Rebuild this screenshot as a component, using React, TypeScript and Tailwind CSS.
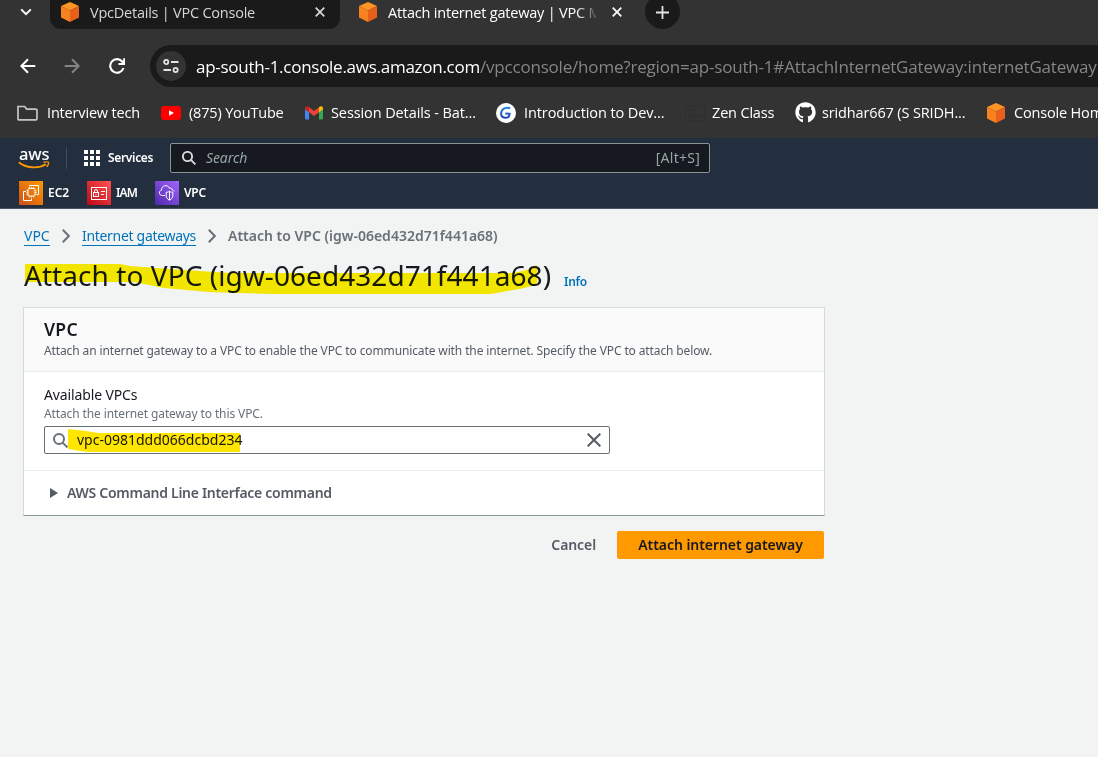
import { FaGithub } from "react-icons/fa";

function Cube() {
  return (
    <svg viewBox="0 0 18 20" className="h-5 w-[18px] shrink-0">
      <path d="M9 0 18 4 9 8.5 0 4Z" fill="#fd9526" />
      <path d="M0 4 9 8.5V20L0 15.5Z" fill="#f8821f" />
      <path d="M18 4 9 8.5V20l9-4.5Z" fill="#e9601c" />
    </svg>
  );
}

function CloseGlyph({ color }: { color: string }) {
  return (
    <svg viewBox="0 0 10 10" className="size-[10px] shrink-0">
      <path d="M.7.7 9.3 9.3M9.3.7.7 9.3" stroke={color} strokeWidth="1.7" />
    </svg>
  );
}

function TabStrip() {
  return (
    <div className="flex h-[45px] items-start pl-5 text-[14.5px]">
      <svg viewBox="0 0 12 8" className="mt-2 h-2 w-3 shrink-0">
        <path d="M1.2 1.4 6 6.2l4.8-4.8" fill="none" stroke="#fff" strokeWidth="2" />
      </svg>
      <div className="ml-[18px] flex h-[29px] w-[290px] shrink-0 items-start rounded-b-[11px] bg-[#1a1a1a] pl-[11px]">
        <div className="mt-[2px]">
          <Cube />
        </div>
        <span className="mt-[3px] ml-[11px] w-[225px] leading-5 tracking-[-0.23px] whitespace-nowrap text-[#d6d6d6]">VpcDetails | VPC Console</span>
        <div className="mt-[7px]">
          <CloseGlyph color="#d8d8d8" />
        </div>
      </div>
      <div className="mt-[2px] ml-[19px]">
        <Cube />
      </div>
      <div className="mt-[3px] ml-[11px] w-[208px] shrink-0 overflow-hidden leading-5 tracking-[-0.2px] whitespace-nowrap text-white [mask-image:linear-gradient(to_right,#000_188px,transparent_212px)]">
        Attach internet gateway | VPC M
      </div>
      <div className="mt-[7px] ml-[16px]">
        <CloseGlyph color="#ffffff" />
      </div>
      <div className="-mt-[6px] ml-[23px] flex size-[35px] shrink-0 items-center justify-center rounded-full bg-[#1a1a1a]">
        <svg viewBox="0 0 13 13" className="mt-px size-[13px]">
          <path d="M6.5 0v13M0 6.5h13" stroke="#e2e2e2" strokeWidth="1.8" />
        </svg>
      </div>
    </div>
  );
}

function AddressRow() {
  return (
    <div className="flex h-[42px] items-center pl-5">
      <svg viewBox="0 0 16 16" className="size-4 shrink-0" fill="none" stroke="#fff" strokeWidth="2">
        <path d="M15.3 8H2M8 1.3 1.4 8 8 14.7" />
      </svg>
      <svg viewBox="0 0 16 16" className="ml-[28px] size-4 shrink-0" fill="none" stroke="#848484" strokeWidth="2">
        <path d="M.7 8H14M8 1.3 14.6 8 8 14.7" />
      </svg>
      <svg viewBox="0 0 16 16" className="ml-[29px] size-4 shrink-0" fill="none" stroke="#fff" strokeWidth="2.1">
        <path d="M14.5 10A6.8 6.8 0 1 1 13.2 3.5L15 5.5M15.2 .3V6H9.5" />
      </svg>
      <div className="ml-[25px] flex h-[42px] flex-1 items-center overflow-hidden rounded-l-full bg-[#1a1a1a] pl-[6px]">
        <div className="flex size-[30px] shrink-0 items-center justify-center rounded-full bg-[#333333]">
          <svg viewBox="0 0 16 14" className="h-[14px] w-4" fill="none" stroke="#e3e3e3" strokeWidth="1.8">
            <circle cx="3.2" cy="3" r="2.1" />
            <path d="M8 3h7.5M.5 11H8" />
            <circle cx="12.6" cy="11" r="2.1" />
          </svg>
        </div>
        <div className="ml-[10px] flex pt-[1px] text-[17px] leading-6 whitespace-nowrap text-[#858585]">
          <span className="tracking-[-0.265px] text-white">ap-south-1.console.aws.amazon.com</span>
          <span className="tracking-[-0.19px]">/vpcconsole/home?region=ap-south-1#AttachInternetGateway:internetGateway</span>
        </div>
      </div>
    </div>
  );
}

function BookmarksBar() {
  return (
    <div className="flex h-[51px] items-center overflow-hidden pl-[17px] text-[14.5px] leading-5 tracking-[-0.17px] whitespace-nowrap text-white">
      <svg viewBox="0 0 21 16" className="h-4 w-[21px] shrink-0" fill="none" stroke="#c7c7c7" strokeWidth="1.7">
        <path d="M1 1.5h6.6l2.1 2.6h9.1q1.2 0 1.2 1.2v8.4q0 1.2-1.2 1.2H2.2Q1 14.9 1 13.7Z" />
      </svg>
      <span className="ml-[9px] w-[114px] shrink-0">Interview tech</span>
      <svg viewBox="0 0 20 14" className="h-[14px] w-5 shrink-0">
        <rect width="20" height="14" rx="3.2" fill="#f00" />
        <path d="M8 4.2 13 7 8 9.8Z" fill="#fff" />
      </svg>
      <span className="ml-[8px] w-[116px] shrink-0">(875) YouTube</span>
      <svg viewBox="0 0 18 14" className="h-[14px] w-[18px] shrink-0">
        <path d="M0 2.5 4 5.2V13.5H1.3Q0 13.5 0 12.2Z" fill="#4285f4" />
        <path d="M18 2.5 14 5.2V13.5h2.7q1.3 0 1.3-1.3Z" fill="#34a853" />
        <path d="M4 1.2 9 5l5-3.8v5L9 10 4 6.2Z" fill="#ea4335" />
        <path d="M0 2.2Q0 .2 2 .2q1 0 2 1v5L0 3.2Z" fill="#c5221f" />
        <path d="M18 2.2Q18 .2 16 .2q-1 0-2 1v5l4-3Z" fill="#fbbc04" />
      </svg>
      <span className="ml-[8px] w-[165px] shrink-0 tracking-[-0.1px]">Session Details - Bat...</span>
      <svg viewBox="0 0 20 20" className="size-5 shrink-0">
        <defs>
          <linearGradient id="gl" x1="0" y1="0" x2="0" y2="1">
            <stop offset="0" stopColor="#2f86dc" />
            <stop offset="1" stopColor="#1a3fb0" />
          </linearGradient>
        </defs>
        <circle cx="10" cy="10" r="10" fill="#fff" />
        <path d="M14.3 5.3C10.5 3.7 5.2 5.5 5.1 10.6c0 5.4 8.2 5.9 8.5.1L9.3 10.6" fill="none" stroke="url(#gl)" strokeWidth="2" />
      </svg>
      <span className="ml-[8px] w-[161px] shrink-0 tracking-[-0.1px]">Introduction to Dev...</span>
      <svg viewBox="0 0 20 16" className="h-4 w-5 shrink-0" fill="none" stroke="#2f2f2f" strokeWidth="1">
        <rect x=".5" y=".5" width="19" height="15" />
        <path d="M3 5h7M3 11h14" />
      </svg>
      <span className="ml-[7px] w-[83px] shrink-0">Zen Class</span>
      <FaGithub className="size-[21px] shrink-0" />
      <span className="ml-[6px] w-[165px] shrink-0 tracking-[-0.14px]">sridhar667 (S SRIDH...</span>
      <Cube />
      <span className="ml-[9px] shrink-0">Console Hom</span>
    </div>
  );
}

function Ec2Icon() {
  return (
    <svg viewBox="0 0 24 24" className="size-6 shrink-0" fill="none" stroke="#fff" strokeWidth="1">
      <defs>
        <linearGradient id="ec2" x1="0" y1="1" x2="1" y2="0">
          <stop offset="0" stopColor="#c8511b" />
          <stop offset="1" stopColor="#f90" />
        </linearGradient>
      </defs>
      <rect width="24" height="24" fill="url(#ec2)" stroke="none" />
      <path d="M10.5 5.5v-1h9v9h-1.500M7 10.500h-2.500v9h8V17.500" />
      <rect x="9" y="7.5" width="7" height="7.5" rx="1" />
      <path d="M10.5 6v1.5M12.5 6v1.5M14.5 6v1.5M10.5 15v1.5M12.5 15v1.5M14.5 15v1.5M7.5 9.5H9M7.5 11.5H9M7.5 13.5H9M16 9.5h1.5M16 11.5h1.5M16 13.5h1.5" strokeWidth=".8" />
    </svg>
  );
}

function IamIcon() {
  return (
    <svg viewBox="0 0 24 24" className="size-6 shrink-0" fill="none" stroke="#fff" strokeWidth="1">
      <defs>
        <linearGradient id="iam" x1="0" y1="1" x2="1" y2="0">
          <stop offset="0" stopColor="#bd0816" />
          <stop offset="1" stopColor="#ff5252" />
        </linearGradient>
      </defs>
      <rect width="24" height="24" fill="url(#iam)" stroke="none" />
      <rect x="4.5" y="6.5" width="15" height="12" />
      <rect x="6.5" y="11.5" width="5" height="4" />
      <path d="M7.5 11.5V10a1.5 1.5 0 0 1 3 0v1.5M9 13v1.2M14 10.5h4M14 13.5h3" />
    </svg>
  );
}

function VpcIcon() {
  return (
    <svg viewBox="0 0 24 24" className="size-6 shrink-0" fill="none" stroke="#fff" strokeWidth="1">
      <defs>
        <linearGradient id="vpc" x1="0" y1="1" x2="1" y2="0">
          <stop offset="0" stopColor="#4d27a8" />
          <stop offset="1" stopColor="#a166ff" />
        </linearGradient>
      </defs>
      <rect width="24" height="24" fill="url(#vpc)" stroke="none" />
      <path d="M10 14.5H7.3C3.6 14.3 3.6 9.9 6.5 9.1 6.3 4.2 12.8 3 14.5 7.3c1.7-.8 2.8.4 2.8 1.7 1.3.2 1.900.8 2.100 1.500" />
      <path d="M14.5 10.3c-1.2.8-2 .9-3.3.9v3.6c0 2 1.3 3.3 3.3 4.4 2-1.1 3.3-2.4 3.3-4.4v-3.6c-1.3 0-2.1-.1-3.3-.9ZM14.5 10.5v8.5" />
    </svg>
  );
}

function ConsoleHeader() {
  return (
    <header className="h-[71px] border-b border-[#4b5563] bg-[#232f3e] text-white">
      <div className="flex h-10 items-center pl-[18px]">
        <div className="flex h-6 w-8 shrink-0 flex-col">
          <span className="pl-px text-[16.5px] leading-[15px] font-medium tracking-[-0.1px]">aws</span>
          <svg viewBox="0 0 32 9" className="h-[9px] w-8" fill="none" stroke="#f90">
            <path d="M.8 1.2C8 7.2 20 8 28 3.2" strokeWidth="1.8" />
            <path d="M25.5 1.5c2-.8 4.6-.8 5 0s-.4 2.6-1.8 4.2" strokeWidth="1.4" />
          </svg>
        </div>
        <div className="ml-4 h-[22px] w-px bg-[#414d5c]" />
        <svg viewBox="0 0 16 16" className="ml-[17px] size-4 shrink-0" fill="#fff">
          <path d="M0 0h4v4H0zM6 0h4v4H6zM12 0h4v4h-4zM0 6h4v4H0zM6 6h4v4H6zM12 6h4v4h-4zM0 12h4v4H0zM6 12h4v4H6zM12 12h4v4h-4z" />
        </svg>
        <span className="ml-2 w-[62px] shrink-0 text-[12px] leading-4 font-semibold tracking-[-0.33px]">Services</span>
        <div className="flex h-[30px] w-[540px] items-center rounded-[2px] border border-[#879596] bg-[#16191f] pr-[9px] pl-[11px] text-[14px] text-[#95a5a6]">
          <svg viewBox="0 0 14 14" className="size-[14px]" fill="none" stroke="#d5dbdb" strokeWidth="1.9">
            <circle cx="5.5" cy="5.5" r="4.6" />
            <path d="m8.9 8.9 4.5 4.5" />
          </svg>
          <span className="ml-[10px] flex-1 pb-px leading-5 tracking-[-0.1px] italic">Search</span>
          <span className="pb-px leading-5 tracking-[0.25px]">[Alt+S]</span>
        </div>
      </div>
      <div className="flex h-[30px] items-center pl-[19px] text-[12px] font-semibold">
        <Ec2Icon />
        <span className="ml-[5px] w-[39px]">EC2</span>
        <IamIcon />
        <span className="ml-[5px] w-[39px] tracking-[-0.9px]">IAM</span>
        <VpcIcon />
        <span className="ml-[5px] tracking-[-0.2px]">VPC</span>
      </div>
    </header>
  );
}

function Chevron() {
  return (
    <svg viewBox="0 0 8 14" className="mx-3 h-[14px] w-2 shrink-0" fill="none" stroke="#687078" strokeWidth="2">
      <path d="m.8.8 6 6.2-6 6.2" />
    </svg>
  );
}

export default function App() {
  return (
    <div className="flex h-[757px] w-[1098px] flex-col overflow-hidden bg-[#f2f3f3] font-['Noto_Sans',sans-serif]">
      <div className="bg-[#333333] font-['Open_Sans',sans-serif]">
        <TabStrip />
        <AddressRow />
        <BookmarksBar />
      </div>
      <ConsoleHeader />
      <main className="flex flex-col pl-6 text-[14px] text-[#16191f]">
        <nav className="mt-4 flex h-[22px] items-center whitespace-nowrap text-[#0073bb]">
          <span className="w-[26px] border-b border-[#0073bb] leading-[18px]">VPC</span>
          <Chevron />
          <span className="w-[114px] border-b border-[#0073bb] leading-[18px] tracking-[-0.31px]">Internet gateways</span>
          <Chevron />
          <span className="pb-[2px] font-semibold text-[#687078]">Attach to VPC (igw-06ed432d71f441a68)</span>
        </nav>
        <div className="relative mt-[12px] flex h-[36px] items-center whitespace-nowrap">
          <h1 className="w-[540px] pb-[4px] text-[28px] leading-[32px] tracking-[0.06px]">Attach to VPC (igw-06ed432d71f441a68)</h1>
          <span className="pt-[9px] text-[12px] leading-4 font-semibold tracking-[-0.25px] text-[#0073bb]">Info</span>
          <svg viewBox="0 0 520 36" className="absolute top-0 left-0 h-9 w-[520px] mix-blend-multiply">
            <path d="M1 5H96l10 2 40 3 60 4H487q15-2 20-5 5-3 6-3V25q-10 4-24 6l-22 4H250l-65-2-45-4-30-6H1Z" fill="#fff200" />
          </svg>
        </div>
        <section className="mt-[12px] -ml-px flex h-[209px] w-[802px] flex-col border border-[#d5dbdb] border-b-[#879596] bg-white">
          <div className="h-[64px] border-b border-[#eaeded] bg-[#fafafa] pt-[11px] pl-5 whitespace-nowrap">
            <h2 className="text-[17.5px] leading-5 font-semibold tracking-[0.3px]">VPC</h2>
            <p className="mt-1 text-[12px] leading-4 tracking-[-0.119px] text-[#545b64]">Attach an internet gateway to a VPC to enable the VPC to communicate with the internet. Specify the VPC to attach below.</p>
          </div>
          <div className="h-[99px] border-b border-[#eaeded] pt-[13px] pl-5">
            <div className="leading-5 tracking-[-0.13px]">Available VPCs</div>
            <div className="mt-px text-[12px] leading-4 tracking-[-0.11px] text-[#687078]">Attach the internet gateway to this VPC.</div>
            <div className="relative mt-[4px] flex h-[28px] w-[566px] items-center rounded-[2px] border border-[#687078] px-2">
              <svg viewBox="0 0 15 15" className="size-[15px]" fill="none" stroke="#687078" strokeWidth="2">
                <circle cx="6" cy="6" r="5" />
                <path d="m9.6 9.6 4.8 4.8" />
              </svg>
              <div className="ml-[9px] flex-1 pb-px leading-5">vpc-0981ddd066dcbd234</div>
              <svg viewBox="0 0 14 14" className="size-[14px]" stroke="#545b64" strokeWidth="2">
                <path d="m.7.7 12.6 12.6M13.3.7.7 13.3" />
              </svg>
              <svg viewBox="0 0 172 24" className="absolute top-[2px] left-[23px] h-6 w-[172px] mix-blend-multiply">
                <path d="M0 0 18 2l12 2h142v19H20L12 22 0 20Z" fill="#ffe600" />
              </svg>
            </div>
          </div>
          <div className="flex flex-1 items-center pl-[26px] font-semibold text-[#545b64]">
            <svg viewBox="0 0 8 10" className="h-[10px] w-2" fill="#545b64">
              <path d="M0 0 8 5 0 10Z" />
            </svg>
            <span className="ml-[9px] pb-px tracking-[-0.29px]">AWS Command Line Interface command</span>
          </div>
        </section>
        <div className="mt-[15px] flex h-7 w-[800px] items-center justify-end font-semibold text-[#545b64]">
          <span className="mr-[21px] pb-px tracking-[-0.1px]">Cancel</span>
          <button className="flex h-7 w-[207px] items-center justify-center rounded-[2px] bg-[#f90] pb-px tracking-[-0.06px] text-[#16191f]">Attach internet gateway</button>
        </div>
      </main>
    </div>
  );
}
